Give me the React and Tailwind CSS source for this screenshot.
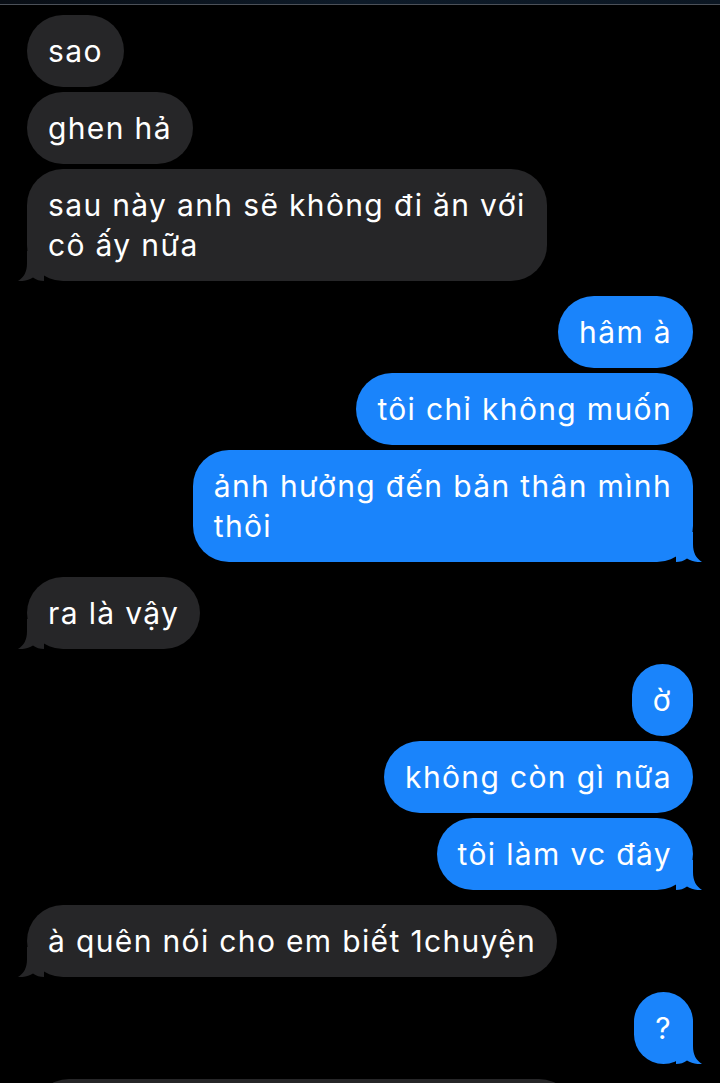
import React from "react";

const messages = [
  { from: "them", lines: ["sao"], start: true },
  { from: "them", lines: ["ghen hả"] },
  { from: "them", lines: ["sau này anh sẽ không đi ăn với", "cô ấy nữa"], tail: true },
  { from: "me", lines: ["hâm à"], first: true },
  { from: "me", lines: ["tôi chỉ không muốn"] },
  { from: "me", lines: ["ảnh hưởng đến bản thân mình", "thôi"], tail: true },
  { from: "them", lines: ["ra là vậy"], tail: true, first: true },
  { from: "me", lines: ["ờ"], first: true },
  { from: "me", lines: ["không còn gì nữa"] },
  { from: "me", lines: ["tôi làm vc đây"], tail: true },
  { from: "them", lines: ["à quên nói cho em biết 1chuyện"], tail: true, first: true },
  { from: "me", lines: ["?"], tail: true, first: true },
];

const Tail = ({ side, color }) => {
  return (
    <svg
      width="26"
      height="30"
      viewBox="0 0 26 30"
      className={
        side === "me"
          ? "absolute bottom-0 right-[-9px]"
          : "absolute bottom-0 left-[-9px] scale-x-[-1]"
      }
    >
      <path
        d="M0 0H17V12C17 21 20 26 26 30C20 30.5 15 29 11 26.5C8 29 4 30 0 30Z"
        fill={color}
      />
    </svg>
  );
};

const Bubble = ({ msg }) => {
  const me = msg.from === "me";
  const color = me ? "#1a84fb" : "#262628";
  const gap = msg.start ? "mt-0" : msg.first ? "mt-[15px]" : "mt-[5px]";
  return (
    <div className={`flex ${me ? "justify-end" : "justify-start"} ${gap}`}>
      <div
        className={`relative rounded-[36px] px-[21px] py-[16px] text-[30px] leading-[40px] tracking-[0.045em] text-white whitespace-nowrap ${
          me ? "bg-[#1a84fb]" : "bg-[#262628]"
        }`}
      >
        {msg.lines.map((line, i) => (
          <div key={i}>{line}</div>
        ))}
        {msg.tail && <Tail side={msg.from} color={color} />}
      </div>
    </div>
  );
};

export default function App() {
  return (
    <div
      className="w-[720px] h-[1083px] overflow-hidden bg-black"
      style={{ fontFamily: "Inter, 'Noto Sans', sans-serif" }}
    >
      <div className="h-[4px] bg-gradient-to-r from-[#080d14] via-[#0d1a28] to-[#0b1622]" />
      <div className="h-px bg-[#4b5058]" />
      <div className="px-[27px] pt-[10px]">
        {messages.map((m, i) => (
          <Bubble key={i} msg={m} />
        ))}
        <div className="mt-[15px] ml-[6px] w-[542px] h-[72px] rounded-[36px] bg-[#262628]" />
      </div>
    </div>
  );
}
